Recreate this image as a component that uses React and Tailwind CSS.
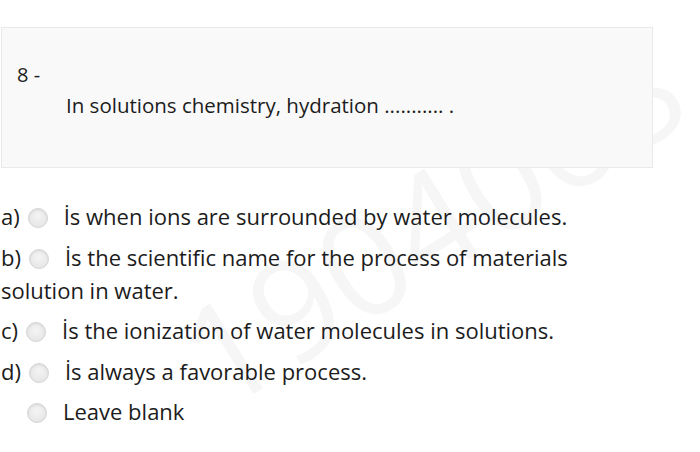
import React from 'react';

const options = [
  { label: 'a)', text: 'İs when ions are surrounded by water molecules.' },
  { label: 'b)', text: 'İs the scientific name for the process of materials solution in water.' },
  { label: 'c)', text: 'İs the ionization of water molecules in solutions.' },
  { label: 'd)', text: 'İs always a favorable process.' },
  { label: '', text: 'Leave blank' },
];

function Radio() {
  return (
    <span className="inline-block w-[20px] h-[20px] rounded-full border border-[#d4d4d4] bg-[radial-gradient(circle_at_50%_40%,#f4f4f4,#e2e2e2)] shadow-[inset_0_1px_2px_rgba(0,0,0,0.08)] align-[-3px]" />
  );
}

export default function App() {
  return (
    <div
      className="relative w-[700px] h-[452px] overflow-hidden bg-white text-[#1c1c1c]"
      style={{ fontFamily: '"Open Sans", "Liberation Sans", sans-serif' }}
    >
      <div className="absolute left-[150px] top-[150px] -rotate-[32deg] text-[140px] leading-none text-[#f6f6f6] select-none">
        1904068
      </div>

      <div className="relative pt-[27px]">
        <div className="ml-[1px] w-[652px] h-[141px] border border-[#e9e9e9] bg-[#f9f9f9] pt-[33px] pl-[15px]">
          <div className="text-[20px] leading-[28px]">8 -</div>
          <div className="pl-[49px] pt-[2px] text-[20.5px] leading-[28px]">
            In solutions chemistry, hydration ........... .
          </div>
        </div>

        <div className="mt-[32px] w-[600px] flex flex-col gap-[7.5px] text-[22px] leading-[33px]">
          {options.map((o, i) => (
            <p key={i} className={o.label ? 'pl-[1px]' : 'pl-[27px]'}>
              {o.label && <span className="mr-[8px]">{o.label}</span>}
              <Radio />
              <span className="ml-[16px]">{o.text}</span>
            </p>
          ))}
        </div>
      </div>
    </div>
  );
}
